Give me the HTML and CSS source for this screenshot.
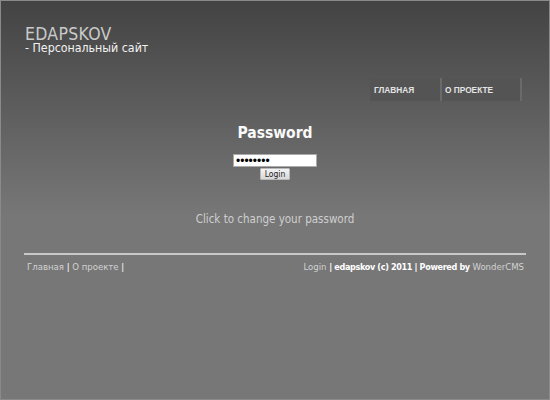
FILE: index.html
```html
<!DOCTYPE html>
<html>
<head>
<meta charset="utf-8">
<link rel="stylesheet" href="styles.css">
</head>
<body>
<div class="page">
  <header class="header">
    <div class="logo">
      <div class="title">EDAPSKOV</div>
      <div class="slogan">- Персональный сайт</div>
    </div>
    <nav class="menu">
      <a class="menu-item item-home" href="#">ГЛАВНАЯ</a>
      <a class="menu-item item-about" href="#">О ПРОЕКТЕ</a>
    </nav>
  </header>
  <main class="content">
    <h1 class="heading">Password</h1>
    <form class="login-form">
      <input class="pass" type="password" value="12345678">
      <button class="btn" type="button">Login</button>
    </form>
    <a class="change" href="#">Click to change your password</a>
  </main>
  <footer class="footer">
    <div class="foot-left"><a href="#">Главная</a> | <a href="#">О проекте</a> |</div>
    <div class="foot-right"><a href="#">Login</a> <b>| edapskov (c) 2011 | Powered by</b> <a href="#">WonderCMS</a></div>
  </footer>
</div>
</body>
</html>
```

FILE: styles.css
```css
html, body {
  margin: 0;
  padding: 0;
  height: 100%;
}
body {
  background: #777 linear-gradient(to bottom, #434343 0px, #777 215px) no-repeat;
  font-family: "DejaVu Sans Condensed", "DejaVu Sans", sans-serif;
  color: #fff;
  box-sizing: border-box;
  border: 1px solid #8a8a8a;
}
a { text-decoration: none; }
.page {
  padding: 0 23px;
}
.header {
  display: flex;
  flex-direction: column;
}
.logo {
  padding-top: 27px;
}
.title {
  font-size: 17.5px;
  color: #cacaca;
  line-height: 13px;
  letter-spacing: 0.3px;
  padding-left: 1px;
}
.slogan {
  font-size: 12.3px;
  color: #f2f2f2;
  line-height: 10px;
  padding-left: 1px;
  margin-top: 2px;
}
.menu {
  align-self: flex-end;
  display: flex;
  margin-top: 25px;
  margin-right: 4px;
  background: #545454;
  border-right: 2px solid #6a6a6a;
}
.menu-item {
  font-family: "Liberation Sans", Arial, sans-serif;
  font-size: 8.3px;
  font-weight: bold;
  color: #e4e4e4;
  height: 23px;
  line-height: 25px;
  padding-left: 4px;
  box-sizing: border-box;
}
.item-home { width: 72px; border-right: 2px solid #6a6a6a; }
.item-about { width: 78px; padding-left: 3px; }
.content {
  display: flex;
  flex-direction: column;
  align-items: center;
}
.heading {
  font-size: 15.5px;
  font-weight: bold;
  margin: 23px 0 0 0;
  line-height: 18px;
  color: #fafafa;
}
.login-form {
  display: flex;
  flex-direction: column;
  align-items: center;
  margin-top: 12px;
}
.pass {
  width: 84px;
  height: 13px;
  box-sizing: border-box;
  border: 1px solid #aaa;
  background: #fff;
  padding: 0 2px;
  font-size: 12px;
  line-height: 11px;
  color: #000;
  margin: 0;
  outline: none;
}
.btn {
  margin-top: 1px;
  width: 30px;
  height: 12px;
  padding: 0;
  font-family: "DejaVu Sans Condensed", "DejaVu Sans", sans-serif;
  font-size: 8.5px;
  line-height: 10px;
  color: #222;
  background: linear-gradient(#f4f4f4, #d8d8d8);
  border: 1px solid #b9b9b9;
  border-radius: 1px;
}
.change {
  margin-top: 32px;
  font-size: 11.5px;
  color: #cfcfcf;
  line-height: 14px;
}
.footer {
  margin-top: 27px;
  border-top: 2px solid #c8c8c8;
  display: flex;
  justify-content: space-between;
  padding: 6px 0 0 3px;
  font-size: 9.5px;
  line-height: 12px;
}
.footer a { color: #d2d2d2; }
.foot-right b { font-weight: bold; color: #fff; font-size: 9px; letter-spacing: -0.35px; }
.foot-right { padding-right: 2px; }
```
